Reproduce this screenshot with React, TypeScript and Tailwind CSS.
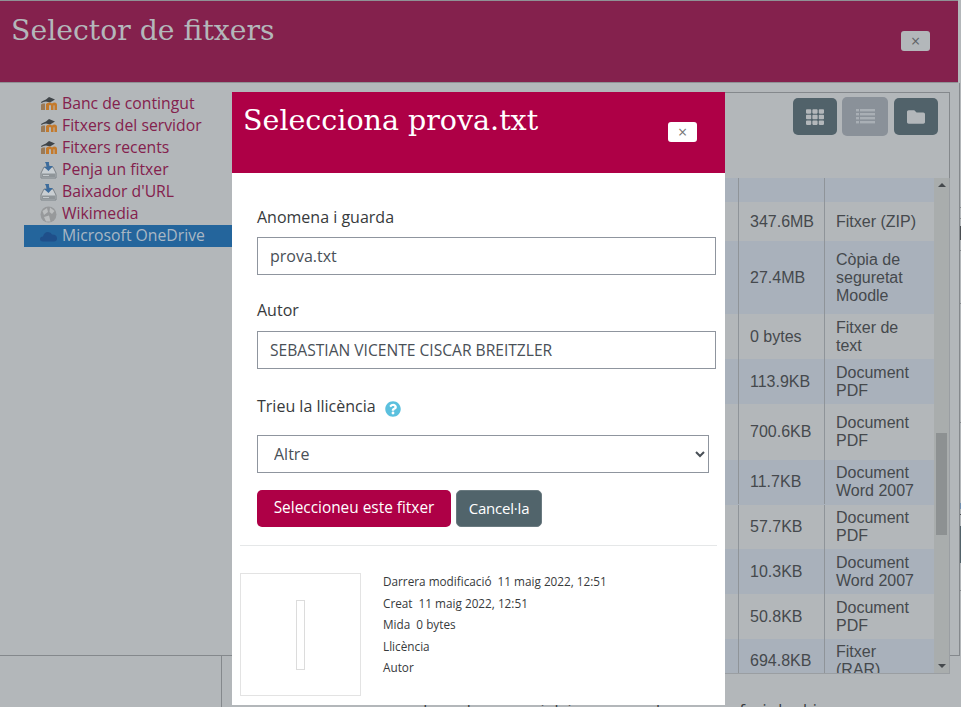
import { FaTh, FaFolder, FaQuestionCircle } from 'react-icons/fa';

const sans = "font-['Open_Sans',sans-serif]";
const slab = "font-['DejaVu_Serif',serif]";

// Moodle cap + m logo, dimmed like the rest of the backdrop
const MoodleIcon = () => (
  <svg width="17" height="16" viewBox="0 0 17 16">
    <path d="M1 6 Q4 4 6 3.5 L9 1 L15 3.5 L10 6.5 L6 5.5 Q3 5.5 1.5 7 Z" fill="#3f4448" />
    <path d="M1 14 V9 Q1 7.5 3 7.5 H5 V14 Z" fill="#9a7a58" />
    <path d="M6 14 V8 Q7 6.5 9.5 6.5 Q11 6.5 12 7.5 Q13 6.5 14.5 6.5 Q17 6.5 17 9 V14 H14.5 V9.5 Q14 9 13.5 9.5 V14 H11 V9.5 Q10.5 9 10 9 Q9 9 9 10 V14 Z" fill="#c47a2c" />
  </svg>
);

const UploadIcon = () => (
  <svg width="17" height="18" viewBox="0 0 17 18">
    <path d="M4 6 L1 12 V17 H16 V12 L13 6 Z" fill="#c9ced2" stroke="#7d8388" strokeWidth="1" />
    <rect x="1.5" y="12.5" width="14" height="4" fill="#8f9599" />
    <rect x="3" y="14" width="6" height="1" fill="#c3c8cc" />
    <path d="M5 1 H9 Q8.5 3.5 9.5 5 H13 L8.5 10 L4 6 H6.5 Q6.5 3 5 1 Z" fill="#3d6c9c" />
  </svg>
);

const WikiIcon = () => (
  <svg width="17" height="17" viewBox="0 0 17 17">
    <circle cx="8.5" cy="8.5" r="8" fill="#97999b" />
    <path d="M2.5 5 L7 2 L8 6 L4 9 Z M10 1.5 L14.5 5 L12 8 L9.5 6 Z M4 11 L9 9.5 L10.5 15.5 L6 15.5 Z" fill="#bcbebf" />
  </svg>
);

const CloudIcon = () => (
  <svg width="17" height="12" viewBox="0 0 17 12">
    <path d="M3 11.5 Q0 11.5 0 9 Q0 6.5 3 6.5 Q4 2 8 2 Q11 2 12 4.5 Q17 4.5 17 8.5 Q17 11.5 14 11.5 Z" fill="#1f4f8a" />
  </svg>
);

// four thin rows, square + long bar
const ListIcon = () => (
  <svg width="19" height="15" viewBox="0 0 19 15" fill="#a9afb5">
    <rect x="0" y="0" width="3" height="2.4" />
    <rect x="4" y="0" width="15" height="2.4" />
    <rect x="0" y="4" width="3" height="2.4" />
    <rect x="4" y="4" width="15" height="2.4" />
    <rect x="0" y="8" width="3" height="2.4" />
    <rect x="4" y="8" width="15" height="2.4" />
    <rect x="0" y="12" width="3" height="2.4" />
    <rect x="4" y="12" width="15" height="2.4" />
  </svg>
);

const navItems = [
  { label: 'Banc de contingut', icon: <MoodleIcon /> },
  { label: 'Fitxers del servidor', icon: <MoodleIcon /> },
  { label: 'Fitxers recents', icon: <MoodleIcon /> },
  { label: 'Penja un fitxer', icon: <UploadIcon /> },
  { label: "Baixador d'URL", icon: <UploadIcon /> },
  { label: 'Wikimedia', icon: <WikiIcon /> },
];

const rows = [
  { size: '', type: [''], h: 'h-[24px]', dark: true },
  { size: '347.6MB', type: ['Fitxer (ZIP)'], h: 'h-[39px]', dark: false },
  { size: '27.4MB', type: ['Còpia de', 'seguretat', 'Moodle'], h: 'h-[73px]', dark: true },
  { size: '0 bytes', type: ['Fitxer de', 'text'], h: 'h-[45px]', dark: false },
  { size: '113.9KB', type: ['Document', 'PDF'], h: 'h-[45px]', dark: true },
  { size: '700.6KB', type: ['Document', 'PDF'], h: 'h-[56px]', dark: false },
  { size: '11.7KB', type: ['Document', 'Word 2007'], h: 'h-[45px] pb-[1px]', dark: true },
  { size: '57.7KB', type: ['Document', 'PDF'], h: 'h-[44px]', dark: false },
  { size: '10.3KB', type: ['Document', 'Word 2007'], h: 'h-[45px]', dark: true },
  { size: '50.8KB', type: ['Document', 'PDF'], h: 'h-[45px]', dark: false },
  { size: '694.8KB', type: ['Fitxer', '(RAR)'], h: 'h-[43px]', dark: true },
];

// bits of the page underneath that peek out at the far right
const edgeMarks = [
  { h: 'h-[124px]', color: '' },
  { h: 'h-[1px]', color: 'bg-[#84888c]' },
  { h: 'h-[10px]', color: '' },
  { h: 'h-[1px]', color: 'bg-[#84888c]' },
  { h: 'h-[7px]', color: '' },
  { h: 'h-[14px]', color: 'bg-[#4a4e52]' },
  { h: 'h-[10px]', color: '' },
  { h: 'h-[1px]', color: 'bg-[#84888c]' },
  { h: 'h-[52px]', color: '' },
  { h: 'h-[1px]', color: 'bg-[#84888c]' },
  { h: 'h-[118px]', color: '' },
  { h: 'h-[1px]', color: 'bg-[#84888c]' },
  { h: 'h-[80px]', color: '' },
  { h: 'h-[6px]', color: 'bg-[#6f8fb0]' },
  { h: 'h-[5px]', color: '' },
  { h: 'h-[1px]', color: 'bg-[#4a4e52]' },
  { h: 'h-[11px]', color: '' },
  { h: 'h-[37px]', color: 'bg-[#51626a]' },
  { h: 'h-[27px]', color: '' },
  { h: 'h-[1px]', color: 'bg-[#84888c]' },
];

const FileTable = () => (
  <div className="flex h-[496px] border-r border-b border-[#9a9ea2] font-['Liberation_Sans',sans-serif] text-[16px] leading-[18px] text-[#45494d]">
    <div className="flex min-w-0 flex-1 flex-col overflow-hidden">
      {rows.map((row, i) => (
        <div key={i} className={`flex shrink-0 ${row.h} ${row.dark ? 'bg-[#a9b1bb]' : 'bg-[#b3b7ba]'}`}>
          <div className="flex-1" />
          <div className="flex w-[86px] items-center border-l border-[#8f9499] pl-[11px]">{row.size}</div>
          <div className="flex w-[110px] flex-col justify-center overflow-hidden border-l border-[#8f9499] pl-[11px]">
            {row.type.map((t) => (
              <div key={t} className="shrink-0">{t}</div>
            ))}
          </div>
        </div>
      ))}
    </div>
    {/* scrollbar */}
    <div className="flex w-[15px] shrink-0 flex-col items-center bg-[#a9adad]">
      <div className="mt-[5px] h-0 w-0 border-x-[4px] border-b-[4px] border-x-transparent border-b-[#45494d]" />
      <div className="mt-[246px] h-[102px] w-[11px] bg-[#8d9192]" />
      <div className="mt-[129px] h-0 w-0 border-x-[4px] border-t-[4px] border-x-transparent border-t-[#45494d]" />
    </div>
  </div>
);

const Dialog = () => (
  <div className={`absolute left-[232px] top-[92px] flex h-[613px] w-[493px] flex-col bg-white ${sans} text-[#373a3c]`}>
    <div className="flex h-[81px] shrink-0 items-start justify-between bg-[#ae0046] pl-[11px] pr-[28px]">
      <h3 className={`${slab} mt-[11px] text-[28.5px] leading-[36px] text-white`}>Selecciona prova.txt</h3>
      <button className="mt-[30px] flex h-[20px] w-[29px] items-center justify-center rounded-[3px] bg-white text-[16px] leading-none text-[#777]">×</button>
    </div>
    <div className="flex flex-1 flex-col px-[8px]">
      <div className="flex flex-col pl-[17px]">
        <label className="mt-[32px] text-[16px] leading-[24px]">Anomena i guarda</label>
        <input readOnly value="prova.txt" className="mt-[8px] h-[38px] w-[459px] border border-[#8f959e] px-[12px] text-[16px] text-[#495057]" />
        <label className="mt-[23px] text-[16px] leading-[24px]">Autor</label>
        <input readOnly value="SEBASTIAN VICENTE CISCAR BREITZLER" className="mt-[9px] h-[38px] w-[459px] border border-[#8f959e] px-[12px] text-[15.6px] text-[#495057]" />
        <div className="mt-[25px] flex items-start">
          <label className="text-[16px] leading-[24px]">Trieu la llicència</label>
          <FaQuestionCircle className="ml-[9px] mt-[7px] text-[#5bc0de]" size={16} />
        </div>
        <select className="mt-[17px] h-[38px] w-[452px] border border-[#8f959e] bg-white px-[12px] text-[16px] text-[#495057]">
          <option>Altre</option>
        </select>
        <div className="mt-[17px] flex items-center gap-[5px]">
          <button className="h-[37px] w-[194px] rounded-[5px] bg-[#ae0046] pb-[1px] text-[15.4px] text-white">Seleccioneu este fitxer</button>
          <button className="h-[37px] w-[86px] rounded-[5px] border border-[#6a7a80] bg-[#51646b] pb-[1px] text-[15px] tracking-[-0.2px] text-white">Cancel·la</button>
        </div>
      </div>
      <div className="mt-[18px] border-t border-[#e5e7e8]" />
      <div className="mt-[27px] flex">
        <div className="flex h-[123px] w-[121px] items-center justify-center border border-[#e3e3e3]">
          <div className="h-[70px] w-[9px] border border-[#dcdcdc]" />
        </div>
        <div className="ml-[22px] mt-[-2px] flex flex-col text-[11.75px] leading-[21.5px] text-[#373a3c]">
          <div>Darrera modificació&nbsp; 11 maig 2022, 12:51</div>
          <div>Creat&nbsp; 11 maig 2022, 12:51</div>
          <div>Mida&nbsp; 0 bytes</div>
          <div>Llicència</div>
          <div>Autor</div>
        </div>
      </div>
    </div>
  </div>
);

export default function App() {
  return (
    <div className={`relative flex h-[707px] w-[961px] flex-col overflow-hidden bg-[#b3b7ba] ${sans}`}>
      <header className="mr-[3px] h-[83px] shrink-0 border-y border-[#8f9295] bg-[#84214d] pl-[11px]">
        <h1 className={`${slab} mt-[12px] text-[28.3px] leading-[36px] text-[#b3b7ba]`}>Selector de fitxers</h1>
        <button className="absolute left-[901px] top-[31px] flex h-[20px] w-[29px] items-center justify-center rounded-[3px] bg-[#b3b7ba] text-[16px] leading-none text-[#5f6366]">×</button>
      </header>

      <div className="flex min-h-0 flex-1">
        {/* repository list */}
        <div className="flex w-[232px] shrink-0 flex-col">
          <nav className="mt-[10px] flex flex-col pl-[24px]">
            {navItems.map((item) => (
              <div key={item.label} className="flex h-[22px] items-center pl-[16px] text-[15.75px] text-[#84214d]">
                <span className="flex w-[22px] shrink-0 items-center">{item.icon}</span>
                {item.label}
              </div>
            ))}
            <div className="flex h-[22px] items-center bg-[#24659c] pl-[16px] text-[15.75px] text-[#a9b7c4]">
              <span className="flex w-[22px] shrink-0 items-center"><CloudIcon /></span>
              Microsoft OneDrive
            </div>
          </nav>
          <div className="mt-[408px] flex flex-1 border-t border-[#84888c]">
            <div className="w-[222px] border-r border-[#84888c]" />
          </div>
        </div>

        {/* file area */}
        <div className="mt-[9px] flex min-w-0 flex-1 flex-col">
          <div className="flex h-[86px] shrink-0 justify-end gap-[5px] border-t border-r border-[#84888c] pr-[11px] pt-[5px]">
            <button className="flex h-[37px] w-[44px] items-center justify-center rounded-[5px] bg-[#51626a] text-[#b3b7ba]"><FaTh size={18} /></button>
            <button className="mt-[-1px] flex h-[39px] w-[46px] items-center justify-center rounded-[5px] bg-[#8a9199]"><ListIcon /></button>
            <button className="ml-[1px] flex h-[37px] w-[44px] items-center justify-center rounded-[5px] bg-[#51626a] text-[#b3b7ba]"><FaFolder size={18} /></button>
          </div>
          <FileTable />
          <div className="mt-[28px] whitespace-nowrap pl-[166px] text-[16px] leading-[16px] text-[#373a3c]">poden esborrar-se i deixar aparcadors per a afegir-les hi</div>
        </div>

        {/* right edge of the page behind */}
        <div className="flex w-[11px] shrink-0">
          <div className="h-[573px] w-[10px] border-r border-b border-[#84888c]" />
          <div className="flex w-[1px] flex-col">
            {edgeMarks.map((m, i) => (
              <div key={i} className={`${m.h} ${m.color}`} />
            ))}
          </div>
        </div>
      </div>

      <Dialog />
    </div>
  );
}
